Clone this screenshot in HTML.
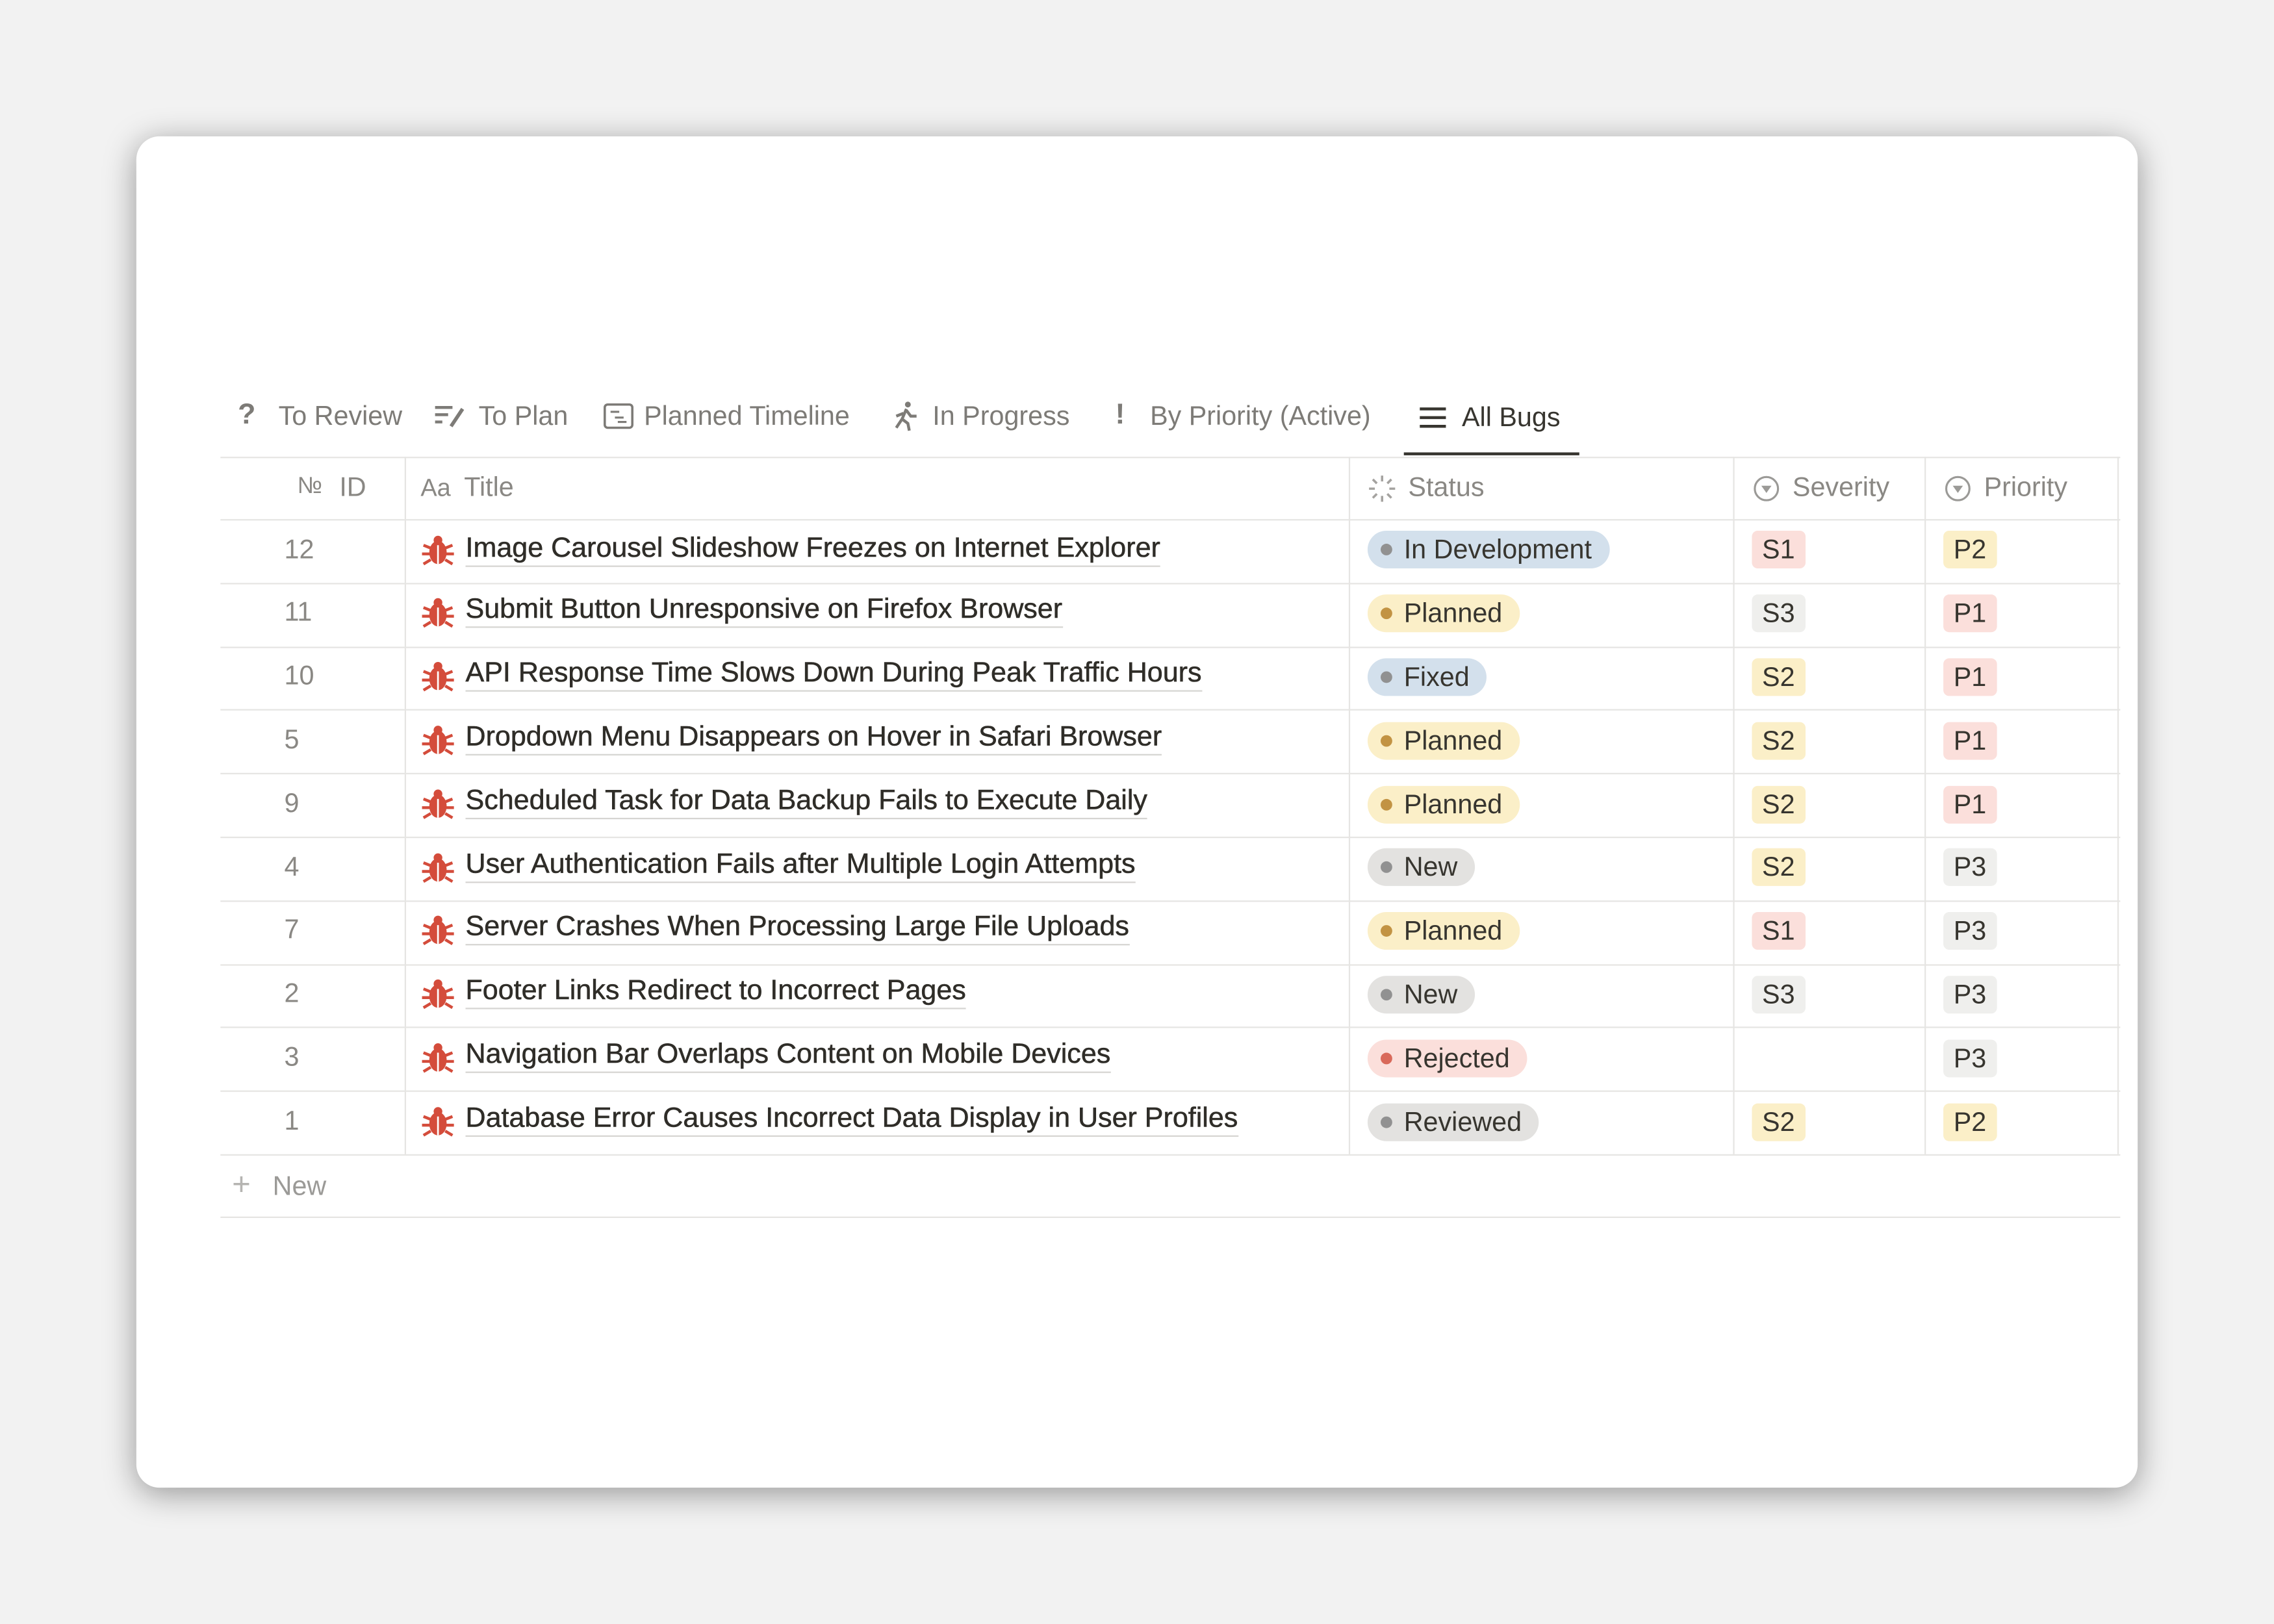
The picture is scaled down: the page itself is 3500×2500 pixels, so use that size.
<!DOCTYPE html>
<html><head><meta charset="utf-8"><style>
html,body{margin:0;padding:0;background:#f2f2f2;width:3500px;height:2500px;overflow:hidden}
#w{position:absolute;left:0;top:0;width:1568px;height:1120px;transform:scale(2.23214);transform-origin:0 0;font-family:"Liberation Sans",sans-serif;}
.card{position:absolute;left:94px;top:94px;width:1380px;height:932px;background:#fff;border-radius:16px;box-shadow:0 4px 22px rgba(0,0,0,.38)}
.t{position:absolute;white-space:nowrap}
.tab{position:absolute;top:276px;font-size:18.5px;color:#7d7b77;white-space:nowrap}
.hl{position:absolute;left:152px;width:1310px;height:1px;background:#e6e5e3}
.vl{position:absolute;top:315px;height:481px;width:1px;background:#e6e5e3}
.hd{position:absolute;top:325px;font-size:18.5px;color:#8a8884}
.id{position:absolute;font-size:18.5px;color:#8a8884;left:196px}
.ti{position:absolute;left:321px;font-size:19.3px;color:#2f2d28;border-bottom:1px solid #d6d5d2;line-height:22px;white-space:nowrap;-webkit-text-stroke:0.25px #2f2d28}
.bug{position:absolute;left:290px}
.pill{position:absolute;left:943px;height:26px;border-radius:13px;font-size:18.5px;color:#37352f;line-height:26px;padding:0 12px 0 25px;white-space:nowrap}
.pill:before{content:"";position:absolute;left:9px;top:9px;width:8px;height:8px;border-radius:50%;background:var(--d)}
.tag{position:absolute;height:26px;line-height:26px;border-radius:4px;font-size:18.5px;color:#37352f;padding:0 7px}
</style></head><body><div id="w">
<div class="card"></div>
<div class="tab" style="left:164px;font-weight:bold;font-size:20px;top:275px">?</div><div class="tab" style="left:192px">To Review</div>
<svg class="t" style="left:299px;top:278px" width="24" height="18" viewBox="0 0 24 18"><path d="M1 3h12M1 8h9M1 13h5" stroke="#7d7b77" stroke-width="2"/><path d="M12 16l8-12" stroke="#7d7b77" stroke-width="2.5"/></svg>
<div class="tab" style="left:330px">To Plan</div>
<svg class="t" style="left:416px;top:278px" width="21" height="18" viewBox="0 0 21 18"><rect x="1" y="1" width="19" height="16" rx="2" fill="none" stroke="#7d7b77" stroke-width="1.6"/><path d="M5 6h6M8 10h6M10 13h6" stroke="#7d7b77" stroke-width="1.4"/></svg>
<div class="tab" style="left:444px">Planned Timeline</div>
<svg class="t" style="left:614px;top:276px" width="20" height="22" viewBox="0 0 20 22"><circle cx="12" cy="3" r="2" fill="#7d7b77"/><path d="M11 6l-3 7 4 3 1 5M9 9l-5 2M11 7l3 4h4M8 13l-4 6" stroke="#7d7b77" stroke-width="2" fill="none"/></svg>
<div class="tab" style="left:643px">In Progress</div>
<div class="tab" style="left:769px;font-weight:bold;font-size:20px;top:275px">!</div><div class="tab" style="left:793px">By Priority (Active)</div>
<svg class="t" style="left:978px;top:280px" width="20" height="16" viewBox="0 0 20 16"><path d="M1 2h18M1 8h18M1 14h18" stroke="#37352f" stroke-width="2"/></svg>
<div class="tab" style="left:1008px;top:277px;color:#37352f">All Bugs</div>
<div class="t" style="left:968px;top:312px;width:121px;height:2px;background:#37352f"></div>

<div class="hl" style="top:315px"></div>
<div class="hl" style="top:358px"></div><div class="hl" style="top:402px"></div><div class="hl" style="top:446px"></div><div class="hl" style="top:489px"></div><div class="hl" style="top:533px"></div><div class="hl" style="top:577px"></div><div class="hl" style="top:621px"></div><div class="hl" style="top:665px"></div><div class="hl" style="top:708px"></div><div class="hl" style="top:752px"></div><div class="hl" style="top:796px"></div><div class="hl" style="top:839px"></div>
<div class="vl" style="left:279px"></div><div class="vl" style="left:930px"></div><div class="vl" style="left:1195px"></div><div class="vl" style="left:1327px"></div><div class="vl" style="left:1460px"></div>

<div class="hd" style="left:205px;font-size:16px;top:327px">№</div><div class="hd" style="left:234px">ID</div>
<div class="hd" style="left:290px;font-size:17px;top:327px">Aa</div><div class="hd" style="left:320px">Title</div>
<svg class="t" style="left:943px;top:327px" width="20" height="20" viewBox="0 0 20 20" stroke="#a5a3a0" stroke-width="1.6"><path d="M10 1v4M10 15v4M1 10h4M15 10h4M3.6 3.6l2.8 2.8M13.6 13.6l2.8 2.8M3.6 16.4l2.8-2.8M13.6 6.4l2.8-2.8"/></svg>
<div class="hd" style="left:971px">Status</div>
<svg class="t" style="left:1209px;top:328px" width="18" height="18" viewBox="0 0 18 18"><circle cx="9" cy="9" r="8" fill="none" stroke="#9b9a97" stroke-width="1.4"/><path d="M5.5 7h7L9 12z" fill="#9b9a97"/></svg>
<div class="hd" style="left:1236px">Severity</div>
<svg class="t" style="left:1341px;top:328px" width="18" height="18" viewBox="0 0 18 18"><circle cx="9" cy="9" r="8" fill="none" stroke="#9b9a97" stroke-width="1.4"/><path d="M5.5 7h7L9 12z" fill="#9b9a97"/></svg>
<div class="hd" style="left:1368px">Priority</div>

<svg width="0" height="0" style="position:absolute"><defs><g id="b" fill="#d44c3b"><ellipse cx="12" cy="13" rx="6" ry="8"/><circle cx="12" cy="4.5" r="3"/><path d="M2 8l5 2M22 8l-5 2M1 14h6M23 14h-6M2 21l5-3M22 21l-5-3" stroke="#d44c3b" stroke-width="2"/><path d="M12 8v13" stroke="#fff" stroke-width="1.2"/></g></defs></svg>

<div class="id" style="top:368px">12</div><svg class="bug" style="top:368px" width="24" height="24"><use href="#b"/></svg><div class="ti" style="top:368px">Image Carousel Slideshow Freezes on Internet Explorer</div>
<div class="pill" style="top:366px;background:#d3e0ec;--d:#919191">In Development</div>
<div class="tag" style="left:1208px;top:366px;background:#fbdfdb">S1</div><div class="tag" style="left:1340px;top:366px;background:#fbefc8">P2</div>

<div class="id" style="top:411px">11</div><svg class="bug" style="top:411px" width="24" height="24"><use href="#b"/></svg><div class="ti" style="top:410px">Submit Button Unresponsive on Firefox Browser</div>
<div class="pill" style="top:410px;background:#fbefc8;--d:#c29343">Planned</div>
<div class="tag" style="left:1208px;top:410px;background:#efefed">S3</div><div class="tag" style="left:1340px;top:410px;background:#fbdfdb">P1</div>

<div class="id" style="top:455px">10</div><svg class="bug" style="top:455px" width="24" height="24"><use href="#b"/></svg><div class="ti" style="top:454px">API Response Time Slows Down During Peak Traffic Hours</div>
<div class="pill" style="top:454px;background:#d3e0ec;--d:#919191">Fixed</div>
<div class="tag" style="left:1208px;top:454px;background:#fbefc8">S2</div><div class="tag" style="left:1340px;top:454px;background:#fbdfdb">P1</div>

<div class="id" style="top:499px">5</div><svg class="bug" style="top:499px" width="24" height="24"><use href="#b"/></svg><div class="ti" style="top:498px">Dropdown Menu Disappears on Hover in Safari Browser</div>
<div class="pill" style="top:498px;background:#fbefc8;--d:#c29343">Planned</div>
<div class="tag" style="left:1208px;top:498px;background:#fbefc8">S2</div><div class="tag" style="left:1340px;top:498px;background:#fbdfdb">P1</div>

<div class="id" style="top:543px">9</div><svg class="bug" style="top:543px" width="24" height="24"><use href="#b"/></svg><div class="ti" style="top:542px">Scheduled Task for Data Backup Fails to Execute Daily</div>
<div class="pill" style="top:542px;background:#fbefc8;--d:#c29343">Planned</div>
<div class="tag" style="left:1208px;top:542px;background:#fbefc8">S2</div><div class="tag" style="left:1340px;top:542px;background:#fbdfdb">P1</div>

<div class="id" style="top:587px">4</div><svg class="bug" style="top:587px" width="24" height="24"><use href="#b"/></svg><div class="ti" style="top:586px">User Authentication Fails after Multiple Login Attempts</div>
<div class="pill" style="top:585px;background:#e3e2e0;--d:#919191">New</div>
<div class="tag" style="left:1208px;top:585px;background:#fbefc8">S2</div><div class="tag" style="left:1340px;top:585px;background:#efefed">P3</div>

<div class="id" style="top:630px">7</div><svg class="bug" style="top:630px" width="24" height="24"><use href="#b"/></svg><div class="ti" style="top:629px">Server Crashes When Processing Large File Uploads</div>
<div class="pill" style="top:629px;background:#fbefc8;--d:#c29343">Planned</div>
<div class="tag" style="left:1208px;top:629px;background:#fbdfdb">S1</div><div class="tag" style="left:1340px;top:629px;background:#efefed">P3</div>

<div class="id" style="top:674px">2</div><svg class="bug" style="top:674px" width="24" height="24"><use href="#b"/></svg><div class="ti" style="top:673px">Footer Links Redirect to Incorrect Pages</div>
<div class="pill" style="top:673px;background:#e3e2e0;--d:#919191">New</div>
<div class="tag" style="left:1208px;top:673px;background:#efefed">S3</div><div class="tag" style="left:1340px;top:673px;background:#efefed">P3</div>

<div class="id" style="top:718px">3</div><svg class="bug" style="top:718px" width="24" height="24"><use href="#b"/></svg><div class="ti" style="top:717px">Navigation Bar Overlaps Content on Mobile Devices</div>
<div class="pill" style="top:717px;background:#fbdfdb;--d:#d9695a">Rejected</div>
<div class="tag" style="left:1340px;top:717px;background:#efefed">P3</div>

<div class="id" style="top:762px">1</div><svg class="bug" style="top:762px" width="24" height="24"><use href="#b"/></svg><div class="ti" style="top:761px">Database Error Causes Incorrect Data Display in User Profiles</div>
<div class="pill" style="top:761px;background:#e3e2e0;--d:#919191">Reviewed</div>
<div class="tag" style="left:1208px;top:761px;background:#fbefc8">S2</div><div class="tag" style="left:1340px;top:761px;background:#fbefc8">P2</div>

<div class="t" style="left:160px;top:804px;font-size:22px;color:#b5b4b1;font-weight:300">+</div>
<div class="t" style="left:188px;top:807px;font-size:18.5px;color:#9b9a97">New</div>
</div></body></html>
